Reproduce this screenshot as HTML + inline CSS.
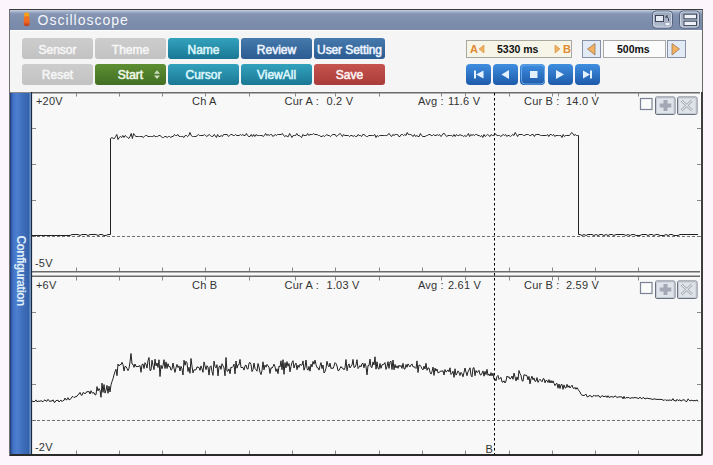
<!DOCTYPE html>
<html><head><meta charset="utf-8">
<style>
html,body{margin:0;padding:0;}
body{width:713px;height:465px;background:#fcf6fc;position:relative;overflow:hidden;font-family:"Liberation Sans",sans-serif;}
.abs{position:absolute;}
#win{left:9px;top:9px;width:692px;height:444px;border-left:1px solid #707070;border-top:1px solid #3a3a3a;border-right:1px solid #6a6a6a;border-bottom:2px solid #2a2a2a;background:#f5f5f5;border-radius:0 0 2px 0;}
#title{left:10px;top:10px;width:692px;height:20px;background:linear-gradient(#c8d2e2 0px,#9eacc6 2px,#8494b2 4px,#7c8cac 12px,#7a8aaa 20px);}
#title .t{left:27.5px;top:1.5px;font-size:14px;letter-spacing:1px;color:#f4f6fa;}
.btn{position:absolute;width:71px;height:21px;border-radius:3px;font-size:12px;font-weight:normal;-webkit-text-stroke:0.55px currentColor;text-align:center;line-height:24px;color:#fff;}
.r2{line-height:23px;}
.g{background:linear-gradient(#cdcdcd,#c2c2c2);color:#f6f6f6;}
.teal{background:linear-gradient(#33a2bd,#1a7894);color:#dcf6fc;}
.blue{background:linear-gradient(#4679ac,#2b5c92);color:#eef4ff;}
.green{background:linear-gradient(#5e8e32,#426f24);color:#f0f8e8;}
.red{background:linear-gradient(#c6544f,#a93b38);color:#fff2f2;}
.mb{position:absolute;top:64px;width:25px;height:21px;border-radius:4px;background:linear-gradient(#3f8ee0,#1d5aaa);}
svg text{white-space:pre;}
</style></head><body>
<div id="win" class="abs"></div>
<div id="title" class="abs" style="width:692px;">
  <div class="abs t">Oscilloscope</div>
</div>
<div class="abs" style="left:10px;top:30px;width:692px;height:62px;background:#f5f5f5;border-top:1px solid #fff;"></div>
<div class="btn g" style="left:22px;top:38px;">Sensor</div>
<div class="btn g" style="left:95px;top:38px;">Theme</div>
<div class="btn teal" style="left:168px;top:38px;">Name</div>
<div class="btn blue" style="left:241px;top:38px;">Review</div>
<div class="btn blue" style="left:314px;top:38px;letter-spacing:-0.1px;">User Setting</div>
<div class="btn g r2" style="left:22px;top:64px;">Reset</div>
<div class="btn green r2" style="left:95px;top:64px;">Start</div>
<div class="btn teal r2" style="left:168px;top:64px;">Cursor</div>
<div class="btn teal r2" style="left:241px;top:64px;">ViewAll</div>
<div class="btn red r2" style="left:314px;top:64px;">Save</div>

<div class="abs" style="left:466px;top:40px;width:104px;height:16px;border:1px solid #a8a8a0;background:#f7f5e8;"></div>
<div class="abs" style="left:470px;top:43px;font-size:11px;font-weight:bold;color:#e08a30;">A</div>
<div class="abs" style="left:497px;top:43px;font-size:10.5px;font-weight:bold;color:#111;">5330 ms</div>
<div class="abs" style="left:563px;top:43px;font-size:11px;font-weight:bold;color:#e08a30;">B</div>
<div class="abs" style="left:582px;top:40px;width:17px;height:16px;border:1px solid #8890a8;background:#e2eaf6;"></div>
<div class="abs" style="left:603px;top:40px;width:61px;height:16px;border:1px solid #a8a8a8;background:#fbfbfb;"></div>
<div class="abs" style="left:617px;top:43px;font-size:10.5px;font-weight:bold;color:#111;">500ms</div>
<div class="abs" style="left:667px;top:40px;width:17px;height:16px;border:1px solid #8890a8;background:#e2eaf6;"></div>

<div class="mb" style="left:466px;"></div>
<div class="mb" style="left:493px;"></div>
<div class="mb" style="left:520px;"></div>
<div class="mb" style="left:548px;"></div>
<div class="mb" style="left:575px;"></div>

<div class="abs" style="left:10px;top:93px;width:21px;height:361px;background:linear-gradient(90deg,#1c3464 0px,#2c54a0 1px,#4272c4 3px,#4e7ed0 7px,#4070bc 12px,#3464ae 18px,#3060a8 19px,#7c9ecc 20px,#7c9ecc 21px);"></div>
<div class="abs" style="left:10px;top:92px;width:692px;height:1px;background:#8a8a8a;"></div>

<svg class="abs" style="left:0;top:0" width="713" height="465">
  <defs>
    <linearGradient id="ic" x1="0" y1="0" x2="0" y2="1"><stop offset="0" stop-color="#f27a20"/><stop offset="0.6" stop-color="#ee6622"/><stop offset="1" stop-color="#b83a18"/></linearGradient>
  </defs>
  <rect x="24.2" y="12.5" width="5" height="5" rx="1.5" fill="#f8a018"/><rect x="23.8" y="16" width="5.8" height="10" rx="2" fill="url(#ic)"/>
  <path d="M98,74.5 h4 M98,71 v0" stroke="none"/>
  <path d="M154,73.8 L157,70.3 L160,73.8 Z M154,75.5 L157,79 L160,75.5 Z" fill="#cfdcc0"/>
  <path d="M479,49 L484,45 L484,53 Z" fill="#f0b060" stroke="#d09040" stroke-width="0.6"/>
  <path d="M560,49 L555,45 L555,53 Z" fill="#f0b060" stroke="#d09040" stroke-width="0.6"/>
  <path d="M587.5,49 L595,43.5 L595,55 Z" fill="#f2b060" stroke="#907050" stroke-width="0.7"/>
  <path d="M679.5,49 L672,43.5 L672,55 Z" fill="#f2b060" stroke="#907050" stroke-width="0.7"/>
  <g fill="#e4f2ff">
    <rect x="474" y="70.5" width="2" height="8"/><path d="M476,74.5 L483.5,70.5 L483.5,78.5 Z"/>
    <path d="M501.5,74.5 L509,70 L509,79 Z"/>
    <rect x="530" y="71" width="7.5" height="7"/>
    <path d="M564,74.5 L556,70 L556,79 Z"/>
    <path d="M590,74.5 L583,70.5 L583,78.5 Z"/><rect x="590" y="70.5" width="2" height="8"/>
  </g>
  <rect x="521.5" y="65" width="23" height="19" rx="3.5" fill="none" stroke="#6aa8e8" stroke-width="1"/>

  <defs><linearGradient id="tb" x1="0" y1="0" x2="0" y2="1"><stop offset="0" stop-color="#9aa6bc"/><stop offset="1" stop-color="#b4bed0"/></linearGradient></defs>
  <rect x="652.5" y="11" width="20" height="17" rx="3.5" fill="url(#tb)" stroke="#56627a" stroke-width="1"/>
  <rect x="653.5" y="12" width="18" height="15" rx="2.5" fill="none" stroke="#d6deea" stroke-width="0.8"/>
  <rect x="655.5" y="15.5" width="8" height="6" fill="#e6ebf3" stroke="#3c4658" stroke-width="1"/>
  <rect x="665" y="22.5" width="5" height="3.3" fill="#eef2f8" stroke="#8088a0" stroke-width="0.5"/>
  <path d="M666,16 L668.5,18.5 M666,16 v2 M666,16 h2 M668.5,18.5 v2.5" stroke="#3c4658" stroke-width="1" fill="none"/>
  <rect x="679.5" y="11" width="20" height="17" rx="3.5" fill="url(#tb)" stroke="#56627a" stroke-width="1"/>
  <rect x="680.5" y="12" width="18" height="15" rx="2.5" fill="none" stroke="#d6deea" stroke-width="0.8"/>
  <rect x="684" y="14.2" width="12.5" height="4.6" fill="#eef2f8" stroke="#3c4658" stroke-width="1"/>
  <rect x="684" y="21.2" width="12.5" height="4.4" fill="#eef2f8" stroke="#3c4658" stroke-width="1"/>

  <rect x="32" y="93" width="668" height="178" fill="#f8f8f8"/>
  <rect x="32" y="277" width="668" height="177" fill="#f8f8f8"/>
  <rect x="31" y="271" width="671" height="6" fill="#f8f8f8"/>
  <line x1="31" y1="92.7" x2="702" y2="92.7" stroke="#6a6a6a" stroke-width="1.5"/>
  <line x1="31" y1="271.7" x2="702" y2="271.7" stroke="#6a6a6a" stroke-width="1.5"/>
  <line x1="31" y1="276.3" x2="702" y2="276.3" stroke="#6a6a6a" stroke-width="1.5"/>
  <line x1="31.5" y1="92" x2="31.5" y2="455" stroke="#1a2a40" stroke-width="1.2"/>
  <rect x="700" y="92" width="1" height="362" fill="#fdfdfd"/><rect x="701" y="92" width="2" height="363" fill="#3e3e3e"/>
  <g stroke="#888" stroke-width="1"><line x1="76.5" y1="93" x2="76.5" y2="96.5"/><line x1="119.5" y1="93" x2="119.5" y2="96.5"/><line x1="162.5" y1="93" x2="162.5" y2="96.5"/><line x1="205.5" y1="93" x2="205.5" y2="96.5"/><line x1="249.5" y1="93" x2="249.5" y2="96.5"/><line x1="335.5" y1="93" x2="335.5" y2="96.5"/><line x1="379.5" y1="93" x2="379.5" y2="96.5"/><line x1="465.5" y1="93" x2="465.5" y2="96.5"/><line x1="509.5" y1="93" x2="509.5" y2="96.5"/><line x1="552.5" y1="93" x2="552.5" y2="96.5"/><line x1="595.5" y1="93" x2="595.5" y2="96.5"/><line x1="638.5" y1="93" x2="638.5" y2="96.5"/><line x1="295.5" y1="93" x2="295.5" y2="96.5"/><line x1="441.5" y1="93" x2="441.5" y2="96.5"/><line x1="558.5" y1="93" x2="558.5" y2="96.5"/><line x1="76.5" y1="267.5" x2="76.5" y2="271"/><line x1="119.5" y1="267.5" x2="119.5" y2="271"/><line x1="162.5" y1="267.5" x2="162.5" y2="271"/><line x1="205.5" y1="267.5" x2="205.5" y2="271"/><line x1="249.5" y1="267.5" x2="249.5" y2="271"/><line x1="292.5" y1="267.5" x2="292.5" y2="271"/><line x1="335.5" y1="267.5" x2="335.5" y2="271"/><line x1="379.5" y1="267.5" x2="379.5" y2="271"/><line x1="422.5" y1="267.5" x2="422.5" y2="271"/><line x1="465.5" y1="267.5" x2="465.5" y2="271"/><line x1="509.5" y1="267.5" x2="509.5" y2="271"/><line x1="552.5" y1="267.5" x2="552.5" y2="271"/><line x1="595.5" y1="267.5" x2="595.5" y2="271"/><line x1="638.5" y1="267.5" x2="638.5" y2="271"/><line x1="76.5" y1="277" x2="76.5" y2="280.5"/><line x1="119.5" y1="277" x2="119.5" y2="280.5"/><line x1="162.5" y1="277" x2="162.5" y2="280.5"/><line x1="205.5" y1="277" x2="205.5" y2="280.5"/><line x1="249.5" y1="277" x2="249.5" y2="280.5"/><line x1="335.5" y1="277" x2="335.5" y2="280.5"/><line x1="379.5" y1="277" x2="379.5" y2="280.5"/><line x1="465.5" y1="277" x2="465.5" y2="280.5"/><line x1="509.5" y1="277" x2="509.5" y2="280.5"/><line x1="552.5" y1="277" x2="552.5" y2="280.5"/><line x1="595.5" y1="277" x2="595.5" y2="280.5"/><line x1="638.5" y1="277" x2="638.5" y2="280.5"/><line x1="295.5" y1="277" x2="295.5" y2="280.5"/><line x1="441.5" y1="277" x2="441.5" y2="280.5"/><line x1="558.5" y1="277" x2="558.5" y2="280.5"/><line x1="76.5" y1="450.5" x2="76.5" y2="454"/><line x1="119.5" y1="450.5" x2="119.5" y2="454"/><line x1="162.5" y1="450.5" x2="162.5" y2="454"/><line x1="205.5" y1="450.5" x2="205.5" y2="454"/><line x1="249.5" y1="450.5" x2="249.5" y2="454"/><line x1="292.5" y1="450.5" x2="292.5" y2="454"/><line x1="335.5" y1="450.5" x2="335.5" y2="454"/><line x1="379.5" y1="450.5" x2="379.5" y2="454"/><line x1="422.5" y1="450.5" x2="422.5" y2="454"/><line x1="465.5" y1="450.5" x2="465.5" y2="454"/><line x1="509.5" y1="450.5" x2="509.5" y2="454"/><line x1="552.5" y1="450.5" x2="552.5" y2="454"/><line x1="595.5" y1="450.5" x2="595.5" y2="454"/><line x1="638.5" y1="450.5" x2="638.5" y2="454"/><line x1="32" y1="128.5" x2="36" y2="128.5"/><line x1="697" y1="128.5" x2="701" y2="128.5"/><line x1="32" y1="164.5" x2="36" y2="164.5"/><line x1="697" y1="164.5" x2="701" y2="164.5"/><line x1="32" y1="200.5" x2="36" y2="200.5"/><line x1="697" y1="200.5" x2="701" y2="200.5"/><line x1="32" y1="236.5" x2="36" y2="236.5"/><line x1="697" y1="236.5" x2="701" y2="236.5"/><line x1="32" y1="312.5" x2="36" y2="312.5"/><line x1="697" y1="312.5" x2="701" y2="312.5"/><line x1="32" y1="348.5" x2="36" y2="348.5"/><line x1="697" y1="348.5" x2="701" y2="348.5"/><line x1="32" y1="384.5" x2="36" y2="384.5"/><line x1="697" y1="384.5" x2="701" y2="384.5"/><line x1="32" y1="420.5" x2="36" y2="420.5"/><line x1="697" y1="420.5" x2="701" y2="420.5"/></g>
  <line x1="32" y1="236.5" x2="701" y2="236.5" stroke="#707070" stroke-width="1" stroke-dasharray="3 2"/>
  <line x1="32" y1="420.5" x2="701" y2="420.5" stroke="#707070" stroke-width="1" stroke-dasharray="3 2"/>
  <path d="M32.0,235.5 L34.0,235.5 L36.0,235.5 L38.0,235.5 L40.0,235.5 L42.0,235.5 L44.0,235.5 L46.0,235.5 L48.0,235.5 L50.0,235.5 L52.0,235.5 L54.0,235.5 L56.0,235.5 L58.0,235.5 L60.0,235.5 L62.0,235.5 L64.0,235.5 L66.0,235.5 L68.0,235.5 L70.0,235.5 L72.0,234.5 L74.0,234.5 L76.0,234.5 L78.0,234.5 L80.0,235.5 L82.0,234.5 L84.0,234.5 L86.0,234.5 L88.0,235.5 L90.0,234.5 L92.0,234.5 L94.0,234.5 L96.0,234.5 L98.0,235.5 L100.0,234.5 L102.0,234.5 L104.0,235.5 L106.0,235.5 L108.0,234.5 L110.5,234.5 L110.5,138.5 L112.0,137.5 L113.2,138.5 L114.4,138.5 L115.6,136.5 L116.8,134.5 L118.0,139.5 L119.2,137.5 L120.4,136.5 L121.6,137.5 L122.8,135.5 L124.0,137.5 L125.2,135.5 L126.4,136.5 L127.6,137.5 L128.8,138.5 L130.0,136.5 L131.2,133.5 L132.4,138.5 L133.6,133.5 L134.8,135.5 L136.0,136.5 L137.2,136.5 L138.4,136.5 L139.6,136.5 L140.8,136.5 L142.0,136.5 L143.2,137.5 L144.4,136.5 L145.6,135.5 L146.8,135.5 L148.0,136.5 L149.2,136.5 L150.4,136.5 L151.6,136.5 L152.8,136.5 L154.0,135.5 L155.2,136.5 L156.4,136.5 L157.6,136.5 L158.8,135.5 L160.0,135.5 L161.2,136.5 L162.4,137.5 L163.6,137.5 L164.8,136.5 L166.0,136.5 L167.2,137.5 L168.4,136.5 L169.6,136.5 L170.8,137.5 L172.0,136.5 L173.2,136.5 L174.4,134.5 L175.6,135.5 L176.8,135.5 L178.0,134.5 L179.2,136.5 L180.4,136.5 L181.6,136.5 L182.8,136.5 L184.0,137.5 L185.2,135.5 L186.4,135.5 L187.6,136.5 L188.8,135.5 L190.0,132.5 L191.2,135.5 L192.4,136.5 L193.6,136.5 L194.8,136.5 L196.0,136.5 L197.2,135.5 L198.4,134.5 L199.6,135.5 L200.8,135.5 L202.0,135.5 L203.2,135.5 L204.4,134.5 L205.6,135.5 L206.8,136.5 L208.0,135.5 L209.2,134.5 L210.4,135.5 L211.6,136.5 L212.8,136.5 L214.0,134.5 L215.2,135.5 L216.4,137.5 L217.6,134.5 L218.8,136.5 L220.0,136.5 L221.2,135.5 L222.4,136.5 L223.6,134.5 L224.8,134.5 L226.0,134.5 L227.2,134.5 L228.4,136.5 L229.6,135.5 L230.8,134.5 L232.0,134.5 L233.2,135.5 L234.4,135.5 L235.6,134.5 L236.8,135.5 L238.0,135.5 L239.2,135.5 L240.4,134.5 L241.6,135.5 L242.8,134.5 L244.0,135.5 L245.2,135.5 L246.4,133.5 L247.6,135.5 L248.8,136.5 L250.0,136.5 L251.2,134.5 L252.4,136.5 L253.6,134.5 L254.8,136.5 L256.0,134.5 L257.2,135.5 L258.4,135.5 L259.6,135.5 L260.8,135.5 L262.0,135.5 L263.2,136.5 L264.4,135.5 L265.6,133.5 L266.8,135.5 L268.0,134.5 L269.2,135.5 L270.4,134.5 L271.6,134.5 L272.8,136.5 L274.0,135.5 L275.2,134.5 L276.4,135.5 L277.6,134.5 L278.8,134.5 L280.0,134.5 L281.2,134.5 L282.4,133.5 L283.6,135.5 L284.8,136.5 L286.0,135.5 L287.2,136.5 L288.4,136.5 L289.6,133.5 L290.8,135.5 L292.0,137.5 L293.2,135.5 L294.4,135.5 L295.6,135.5 L296.8,133.5 L298.0,135.5 L299.2,135.5 L300.4,136.5 L301.6,137.5 L302.8,134.5 L304.0,135.5 L305.2,135.5 L306.4,135.5 L307.6,133.5 L308.8,135.5 L310.0,134.5 L311.2,134.5 L312.4,134.5 L313.6,133.5 L314.8,134.5 L316.0,134.5 L317.2,134.5 L318.4,135.5 L319.6,135.5 L320.8,136.5 L322.0,136.5 L323.2,135.5 L324.4,136.5 L325.6,135.5 L326.8,134.5 L328.0,135.5 L329.2,135.5 L330.4,136.5 L331.6,135.5 L332.8,134.5 L334.0,134.5 L335.2,134.5 L336.4,136.5 L337.6,135.5 L338.8,134.5 L340.0,133.5 L341.2,134.5 L342.4,136.5 L343.6,134.5 L344.8,135.5 L346.0,135.5 L347.2,135.5 L348.4,135.5 L349.6,136.5 L350.8,135.5 L352.0,135.5 L353.2,136.5 L354.4,135.5 L355.6,136.5 L356.8,136.5 L358.0,134.5 L359.2,135.5 L360.4,135.5 L361.6,136.5 L362.8,134.5 L364.0,134.5 L365.2,135.5 L366.4,136.5 L367.6,136.5 L368.8,135.5 L370.0,135.5 L371.2,135.5 L372.4,135.5 L373.6,135.5 L374.8,134.5 L376.0,137.5 L377.2,135.5 L378.4,136.5 L379.6,135.5 L380.8,135.5 L382.0,135.5 L383.2,135.5 L384.4,135.5 L385.6,135.5 L386.8,135.5 L388.0,134.5 L389.2,133.5 L390.4,135.5 L391.6,136.5 L392.8,134.5 L394.0,135.5 L395.2,134.5 L396.4,134.5 L397.6,134.5 L398.8,136.5 L400.0,136.5 L401.2,134.5 L402.4,134.5 L403.6,135.5 L404.8,134.5 L406.0,135.5 L407.2,132.5 L408.4,134.5 L409.6,134.5 L410.8,134.5 L412.0,135.5 L413.2,136.5 L414.4,134.5 L415.6,136.5 L416.8,135.5 L418.0,136.5 L419.2,136.5 L420.4,133.5 L421.6,135.5 L422.8,136.5 L424.0,136.5 L425.2,136.5 L426.4,135.5 L427.6,135.5 L428.8,134.5 L430.0,134.5 L431.2,135.5 L432.4,135.5 L433.6,134.5 L434.8,135.5 L436.0,135.5 L437.2,134.5 L438.4,135.5 L439.6,134.5 L440.8,136.5 L442.0,135.5 L443.2,133.5 L444.4,133.5 L445.6,135.5 L446.8,136.5 L448.0,135.5 L449.2,135.5 L450.4,135.5 L451.6,135.5 L452.8,136.5 L454.0,134.5 L455.2,136.5 L456.4,134.5 L457.6,135.5 L458.8,135.5 L460.0,134.5 L461.2,135.5 L462.4,135.5 L463.6,136.5 L464.8,135.5 L466.0,136.5 L467.2,135.5 L468.4,133.5 L469.6,136.5 L470.8,134.5 L472.0,135.5 L473.2,134.5 L474.4,135.5 L475.6,134.5 L476.8,134.5 L478.0,135.5 L479.2,135.5 L480.4,136.5 L481.6,135.5 L482.8,137.5 L484.0,134.5 L485.2,136.5 L486.4,135.5 L487.6,134.5 L488.8,135.5 L490.0,136.5 L491.2,134.5 L492.4,135.5 L493.6,135.5 L494.8,133.5 L496.0,134.5 L497.2,135.5 L498.4,135.5 L499.6,135.5 L500.8,136.5 L502.0,135.5 L503.2,134.5 L504.4,135.5 L505.6,134.5 L506.8,136.5 L508.0,135.5 L509.2,135.5 L510.4,136.5 L511.6,135.5 L512.8,134.5 L514.0,135.5 L515.2,132.5 L516.4,134.5 L517.6,136.5 L518.8,134.5 L520.0,134.5 L521.2,134.5 L522.4,134.5 L523.6,135.5 L524.8,135.5 L526.0,134.5 L527.2,134.5 L528.4,134.5 L529.6,135.5 L530.8,135.5 L532.0,134.5 L533.2,134.5 L534.4,136.5 L535.6,134.5 L536.8,134.5 L538.0,134.5 L539.2,134.5 L540.4,135.5 L541.6,135.5 L542.8,135.5 L544.0,135.5 L545.2,135.5 L546.4,135.5 L547.6,134.5 L548.8,136.5 L550.0,134.5 L551.2,134.5 L552.4,135.5 L553.6,134.5 L554.8,136.5 L556.0,135.5 L557.2,135.5 L558.4,135.5 L559.6,135.5 L560.8,135.5 L562.0,137.5 L563.2,134.5 L564.4,136.5 L565.6,135.5 L566.8,135.5 L568.0,135.5 L569.2,135.5 L570.4,134.5 L571.6,132.5 L572.8,133.5 L574.0,135.5 L575.2,134.5 L576.4,135.5 L577.6,135.5 L578.5,135.5 L578.5,234.5 L580.0,234.5 L582.0,235.5 L584.0,234.5 L586.0,235.5 L588.0,234.5 L590.0,234.5 L592.0,234.5 L594.0,235.5 L596.0,234.5 L598.0,235.5 L600.0,234.5 L602.0,234.5 L604.0,235.5 L606.0,234.5 L608.0,235.5 L610.0,234.5 L612.0,234.5 L614.0,235.5 L616.0,234.5 L618.0,234.5 L620.0,234.5 L622.0,234.5 L624.0,234.5 L626.0,235.5 L628.0,234.5 L630.0,235.5 L632.0,234.5 L634.0,234.5 L636.0,235.5 L638.0,235.5 L640.0,235.5 L642.0,234.5 L644.0,234.5 L646.0,234.5 L648.0,235.5 L650.0,234.5 L652.0,234.5 L654.0,235.5 L656.0,234.5 L658.0,234.5 L660.0,235.5 L662.0,235.5 L664.0,235.5 L666.0,234.5 L668.0,235.5 L670.0,234.5 L672.0,234.5 L674.0,235.5 L676.0,235.5 L678.0,235.5 L680.0,234.5 L682.0,234.5 L684.0,234.5 L686.0,234.5 L688.0,234.5 L690.0,234.5 L692.0,234.5 L694.0,234.5 L696.0,234.5 L698.0,234.5" fill="none" stroke="#222" stroke-width="1"/>
  <path d="M32.0,401.1 L33.0,401.4 L34.0,401.7 L35.0,401.4 L36.0,399.9 L37.0,401.8 L38.0,401.1 L39.0,401.2 L40.0,401.3 L41.0,400.6 L42.0,401.3 L43.0,401.8 L44.0,400.4 L45.0,399.9 L46.0,401.2 L47.0,401.1 L48.0,399.3 L49.0,400.8 L50.0,401.6 L51.0,400.7 L52.0,401.2 L53.0,399.8 L54.0,402.1 L55.0,402.3 L56.0,400.5 L57.0,400.5 L58.0,400.1 L59.0,402.0 L60.0,400.8 L61.0,400.1 L62.0,401.7 L63.0,400.6 L64.0,400.4 L65.0,398.0 L66.0,399.8 L67.0,399.7 L68.0,397.7 L69.0,399.8 L70.0,399.4 L71.0,398.6 L72.0,396.7 L73.0,396.6 L74.0,397.6 L75.0,396.9 L76.0,396.7 L77.0,396.2 L78.0,394.6 L79.0,394.1 L80.0,392.4 L81.0,394.9 L82.0,395.4 L83.0,392.5 L84.0,393.0 L85.0,393.6 L86.0,393.0 L87.0,391.3 L88.0,392.1 L89.0,391.3 L90.0,394.0 L91.0,390.7 L92.0,392.8 L93.0,393.0 L94.0,392.7 L95.0,394.9 L96.0,394.7 L97.0,386.6 L98.0,390.9 L99.0,388.6 L100.0,390.2 L101.0,397.3 L102.0,383.1 L103.0,392.4 L104.0,384.5 L105.0,393.1 L106.0,390.3 L107.0,385.4 L108.0,393.3 L109.0,386.1 L110.0,392.0 L111.0,384.9 L112.0,381.5 L113.0,378.8 L114.0,374.9 L115.0,371.6 L116.0,369.3 L117.0,375.7 L118.0,364.1 L119.0,366.0 L120.0,364.6 L121.0,364.7 L122.0,362.3 L123.0,364.6 L124.0,371.0 L125.0,366.3 L126.0,366.6 L127.0,368.4 L128.0,370.6 L129.0,368.4 L130.0,362.0 L131.0,353.5 L132.0,364.0 L133.0,364.3 L134.0,367.4 L135.0,364.0 L136.0,366.5 L137.0,366.6 L138.0,366.4 L139.0,366.3 L140.0,365.5 L141.0,372.3 L142.0,364.5 L143.0,364.0 L144.0,368.6 L145.0,362.7 L146.0,364.2 L147.0,368.1 L148.0,360.7 L149.0,357.5 L150.0,370.6 L151.0,370.1 L152.0,360.2 L153.0,365.5 L154.0,369.7 L155.0,359.2 L156.0,365.9 L157.0,363.0 L158.0,367.5 L159.0,359.8 L160.0,376.5 L161.0,365.3 L162.0,368.7 L163.0,365.6 L164.0,359.7 L165.0,368.5 L166.0,361.9 L167.0,368.5 L168.0,363.7 L169.0,366.9 L170.0,366.5 L171.0,370.2 L172.0,369.3 L173.0,363.0 L174.0,368.2 L175.0,372.4 L176.0,367.8 L177.0,364.4 L178.0,367.5 L179.0,365.9 L180.0,371.0 L181.0,366.4 L182.0,368.8 L183.0,375.0 L184.0,360.2 L185.0,365.3 L186.0,361.3 L187.0,362.8 L188.0,371.5 L189.0,367.3 L190.0,373.3 L191.0,358.5 L192.0,366.2 L193.0,372.9 L194.0,369.7 L195.0,370.0 L196.0,369.8 L197.0,366.8 L198.0,367.4 L199.0,367.4 L200.0,370.4 L201.0,365.9 L202.0,368.8 L203.0,372.3 L204.0,361.9 L205.0,365.9 L206.0,369.7 L207.0,365.7 L208.0,367.1 L209.0,375.1 L210.0,366.8 L211.0,365.8 L212.0,371.7 L213.0,375.4 L214.0,361.1 L215.0,366.3 L216.0,367.9 L217.0,364.7 L218.0,375.9 L219.0,367.0 L220.0,365.8 L221.0,369.4 L222.0,363.7 L223.0,365.8 L224.0,367.9 L225.0,375.8 L226.0,357.5 L227.0,371.1 L228.0,371.2 L229.0,368.9 L230.0,373.8 L231.0,367.1 L232.0,367.7 L233.0,366.5 L234.0,364.1 L235.0,373.9 L236.0,361.0 L237.0,368.2 L238.0,364.9 L239.0,364.7 L240.0,359.4 L241.0,367.6 L242.0,367.4 L243.0,367.5 L244.0,370.1 L245.0,365.7 L246.0,365.0 L247.0,368.7 L248.0,369.1 L249.0,363.2 L250.0,362.4 L251.0,364.4 L252.0,371.6 L253.0,369.6 L254.0,363.1 L255.0,368.4 L256.0,369.7 L257.0,371.2 L258.0,363.5 L259.0,367.0 L260.0,372.2 L261.0,374.6 L262.0,370.7 L263.0,361.8 L264.0,369.9 L265.0,365.1 L266.0,367.2 L267.0,364.4 L268.0,365.8 L269.0,367.2 L270.0,373.5 L271.0,367.8 L272.0,368.2 L273.0,366.7 L274.0,364.2 L275.0,366.7 L276.0,371.5 L277.0,368.8 L278.0,373.7 L279.0,366.1 L280.0,367.0 L281.0,360.8 L282.0,369.8 L283.0,359.7 L284.0,374.3 L285.0,362.6 L286.0,367.9 L287.0,361.6 L288.0,366.3 L289.0,363.5 L290.0,371.8 L291.0,366.4 L292.0,362.5 L293.0,360.7 L294.0,368.0 L295.0,364.6 L296.0,363.1 L297.0,369.7 L298.0,365.2 L299.0,367.4 L300.0,364.2 L301.0,365.1 L302.0,365.2 L303.0,360.9 L304.0,370.2 L305.0,367.1 L306.0,360.0 L307.0,368.5 L308.0,370.2 L309.0,366.4 L310.0,371.2 L311.0,364.2 L312.0,366.9 L313.0,361.4 L314.0,364.2 L315.0,360.1 L316.0,364.5 L317.0,367.6 L318.0,367.8 L319.0,370.1 L320.0,365.7 L321.0,362.6 L322.0,368.6 L323.0,365.0 L324.0,373.0 L325.0,371.6 L326.0,368.3 L327.0,361.3 L328.0,365.3 L329.0,366.9 L330.0,363.1 L331.0,368.6 L332.0,367.8 L333.0,368.6 L334.0,366.1 L335.0,362.6 L336.0,363.6 L337.0,366.0 L338.0,370.7 L339.0,370.4 L340.0,368.3 L341.0,366.5 L342.0,368.1 L343.0,368.2 L344.0,369.9 L345.0,367.8 L346.0,359.5 L347.0,370.7 L348.0,365.8 L349.0,363.9 L350.0,368.0 L351.0,366.1 L352.0,365.2 L353.0,359.4 L354.0,367.5 L355.0,367.1 L356.0,364.9 L357.0,359.7 L358.0,368.6 L359.0,367.3 L360.0,365.6 L361.0,366.9 L362.0,363.7 L363.0,363.3 L364.0,367.8 L365.0,363.4 L366.0,366.4 L367.0,374.9 L368.0,365.5 L369.0,365.7 L370.0,359.1 L371.0,367.1 L372.0,367.5 L373.0,361.9 L374.0,365.0 L375.0,356.8 L376.0,369.2 L377.0,361.8 L378.0,368.4 L379.0,369.2 L380.0,363.5 L381.0,368.3 L382.0,364.9 L383.0,364.4 L384.0,364.3 L385.0,362.6 L386.0,369.4 L387.0,366.5 L388.0,361.6 L389.0,368.4 L390.0,362.0 L391.0,361.2 L392.0,369.5 L393.0,360.0 L394.0,369.8 L395.0,364.4 L396.0,367.9 L397.0,365.8 L398.0,368.3 L399.0,365.2 L400.0,366.7 L401.0,365.4 L402.0,368.4 L403.0,363.3 L404.0,368.9 L405.0,369.1 L406.0,364.5 L407.0,367.3 L408.0,363.9 L409.0,365.5 L410.0,366.9 L411.0,364.9 L412.0,363.9 L413.0,366.8 L414.0,366.8 L415.0,367.4 L416.0,368.5 L417.0,360.9 L418.0,372.5 L419.0,365.0 L420.0,365.2 L421.0,366.6 L422.0,368.9 L423.0,369.9 L424.0,366.2 L425.0,369.0 L426.0,363.3 L427.0,370.3 L428.0,368.0 L429.0,367.9 L430.0,372.2 L431.0,374.1 L432.0,371.6 L433.0,367.1 L434.0,375.4 L435.0,368.1 L436.0,371.1 L437.0,369.0 L438.0,372.9 L439.0,372.5 L440.0,371.6 L441.0,370.9 L442.0,371.4 L443.0,370.6 L444.0,375.0 L445.0,369.5 L446.0,372.0 L447.0,371.3 L448.0,369.9 L449.0,371.9 L450.0,367.8 L451.0,374.5 L452.0,373.3 L453.0,371.2 L454.0,377.4 L455.0,368.8 L456.0,375.1 L457.0,373.4 L458.0,370.9 L459.0,372.5 L460.0,375.5 L461.0,372.3 L462.0,373.8 L463.0,376.8 L464.0,372.5 L465.0,368.0 L466.0,372.0 L467.0,375.7 L468.0,371.9 L469.0,370.0 L470.0,367.8 L471.0,375.2 L472.0,376.9 L473.0,368.2 L474.0,367.6 L475.0,375.7 L476.0,370.5 L477.0,372.5 L478.0,371.9 L479.0,370.3 L480.0,374.7 L481.0,375.0 L482.0,373.2 L483.0,370.9 L484.0,376.2 L485.0,371.4 L486.0,374.6 L487.0,369.3 L488.0,375.3 L489.0,374.0 L490.0,376.0 L491.0,372.6 L492.0,375.9 L493.0,373.2 L494.0,379.3 L495.0,378.6 L496.0,380.8 L497.0,376.4 L498.0,375.4 L499.0,379.4 L500.0,378.3 L501.0,377.4 L502.0,382.0 L503.0,382.2 L504.0,380.8 L505.0,383.0 L506.0,381.0 L507.0,376.0 L508.0,377.3 L509.0,376.7 L510.0,379.0 L511.0,378.2 L512.0,376.0 L513.0,379.3 L514.0,373.1 L515.0,376.9 L516.0,380.9 L517.0,376.9 L518.0,379.8 L519.0,370.5 L520.0,373.6 L521.0,375.3 L522.0,380.6 L523.0,381.2 L524.0,374.6 L525.0,375.3 L526.0,375.1 L527.0,375.7 L528.0,379.9 L529.0,376.4 L530.0,383.9 L531.0,378.8 L532.0,376.2 L533.0,379.8 L534.0,377.9 L535.0,381.4 L536.0,381.1 L537.0,377.6 L538.0,382.4 L539.0,380.4 L540.0,379.2 L541.0,380.7 L542.0,381.8 L543.0,378.8 L544.0,378.7 L545.0,382.8 L546.0,380.3 L547.0,380.5 L548.0,382.5 L549.0,379.6 L550.0,383.0 L551.0,380.5 L552.0,383.0 L553.0,380.8 L554.0,383.4 L555.0,385.6 L556.0,383.9 L557.0,383.3 L558.0,388.2 L559.0,384.0 L560.0,388.6 L561.0,384.7 L562.0,384.4 L563.0,389.4 L564.0,384.9 L565.0,387.9 L566.0,387.9 L567.0,384.3 L568.0,387.3 L569.0,385.7 L570.0,388.0 L571.0,386.6 L572.0,385.2 L573.0,387.9 L574.0,388.7 L575.0,387.3 L576.0,389.3 L577.0,387.6 L578.0,389.2 L579.0,390.9 L580.0,391.8 L581.0,394.4 L582.0,395.2 L583.0,395.4 L584.0,395.5 L585.0,395.1 L586.0,394.1 L587.0,396.7 L588.0,397.0 L589.0,395.6 L590.0,395.7 L591.0,396.0 L592.0,397.2 L593.0,396.1 L594.0,395.2 L595.0,396.3 L596.0,395.5 L597.0,396.3 L598.0,395.5 L599.0,395.8 L600.0,397.5 L601.0,396.9 L602.0,395.5 L603.0,396.3 L604.0,396.5 L605.0,396.5 L606.0,395.9 L607.0,397.5 L608.0,395.7 L609.0,397.5 L610.0,397.1 L611.0,396.6 L612.0,396.6 L613.0,397.1 L614.0,397.1 L615.0,395.8 L616.0,396.6 L617.0,397.5 L618.0,397.0 L619.0,397.0 L620.0,396.7 L621.0,397.0 L622.0,396.9 L623.0,398.9 L624.0,396.3 L625.0,398.6 L626.0,397.5 L627.0,397.7 L628.0,397.7 L629.0,397.4 L630.0,398.7 L631.0,397.8 L632.0,397.8 L633.0,397.8 L634.0,398.0 L635.0,397.2 L636.0,398.0 L637.0,397.7 L638.0,398.5 L639.0,398.4 L640.0,397.0 L641.0,398.4 L642.0,398.8 L643.0,397.4 L644.0,397.9 L645.0,399.1 L646.0,398.2 L647.0,398.4 L648.0,398.0 L649.0,399.0 L650.0,398.4 L651.0,399.1 L652.0,399.2 L653.0,399.4 L654.0,398.8 L655.0,399.0 L656.0,399.4 L657.0,399.3 L658.0,399.6 L659.0,399.2 L660.0,399.5 L661.0,399.4 L662.0,399.5 L663.0,400.0 L664.0,400.6 L665.0,399.5 L666.0,400.5 L667.0,400.1 L668.0,400.1 L669.0,400.5 L670.0,399.7 L671.0,400.5 L672.0,400.2 L673.0,398.6 L674.0,400.8 L675.0,400.4 L676.0,401.3 L677.0,399.3 L678.0,400.5 L679.0,400.4 L680.0,399.7 L681.0,401.2 L682.0,400.4 L683.0,399.9 L684.0,399.8 L685.0,400.3 L686.0,401.8 L687.0,401.3 L688.0,398.9 L689.0,399.8 L690.0,401.0 L691.0,400.3 L692.0,400.2 L693.0,400.9 L694.0,400.5 L695.0,400.7 L696.0,400.7 L697.0,399.9 L698.0,401.5" fill="none" stroke="#222" stroke-width="1"/>
  <line x1="494.5" y1="93" x2="494.5" y2="454" stroke="#000" stroke-width="1" stroke-dasharray="2.5 2.5"/>
  <g font-family="Liberation Sans" font-size="11" fill="#333" letter-spacing="0.2">
    <text x="36" y="105">+20V</text>
    <text x="192" y="105">Ch A</text>
    <text x="284.5" y="105">Cur A :</text><text x="326.5" y="105">0.2 V</text>
    <text x="418" y="105">Avg :</text><text x="448" y="105">11.6 V</text>
    <text x="524" y="105">Cur B :</text><text x="566" y="105">14.0 V</text>
    <text x="35" y="267">-5V</text>
    <text x="36" y="289">+6V</text>
    <text x="192" y="289">Ch B</text>
    <text x="284.5" y="289">Cur A :</text><text x="326.5" y="289">1.03 V</text>
    <text x="418" y="289">Avg :</text><text x="448" y="289">2.61 V</text>
    <text x="524" y="289">Cur B :</text><text x="566" y="289">2.59 V</text>
    <text x="35" y="451">-2V</text>
    <text x="485.5" y="453">B</text>
  </g>
<g transform="translate(0,0)">
    <rect x="640.5" y="98.5" width="11.5" height="11" fill="#fbfbfb" stroke="#7a8294" stroke-width="1.2"/>
    <rect x="655.5" y="97" width="19.5" height="17.5" rx="1.5" fill="#dfe3ea" stroke="#6a7080" stroke-width="1"/>
    <rect x="677.5" y="97" width="19.5" height="17.5" rx="1.5" fill="#dfe3ea" stroke="#6a7080" stroke-width="1"/>
    <rect x="656.5" y="98" width="17.5" height="15.5" fill="none" stroke="#c4cad4" stroke-width="1"/>
    <rect x="678.5" y="98" width="17.5" height="15.5" fill="none" stroke="#c4cad4" stroke-width="1"/>
    <path d="M663.5,100 h4 v3.5 h3.8 v4 h-3.8 v3.5 h-4 v-3.5 h-3.8 v-4 h3.8 z" fill="#a2a9b5"/>
    <path d="M681.5,100.5 L692,110.5 M692,100.5 L681.5,110.5" stroke="#a8aeb8" stroke-width="2.6"/>
    <path d="M681.5,100.5 L692,110.5 M692,100.5 L681.5,110.5" stroke="#f2f4f6" stroke-width="1"/>
  </g><g transform="translate(0,184)">
    <rect x="640.5" y="98.5" width="11.5" height="11" fill="#fbfbfb" stroke="#7a8294" stroke-width="1.2"/>
    <rect x="655.5" y="97" width="19.5" height="17.5" rx="1.5" fill="#dfe3ea" stroke="#6a7080" stroke-width="1"/>
    <rect x="677.5" y="97" width="19.5" height="17.5" rx="1.5" fill="#dfe3ea" stroke="#6a7080" stroke-width="1"/>
    <rect x="656.5" y="98" width="17.5" height="15.5" fill="none" stroke="#c4cad4" stroke-width="1"/>
    <rect x="678.5" y="98" width="17.5" height="15.5" fill="none" stroke="#c4cad4" stroke-width="1"/>
    <path d="M663.5,100 h4 v3.5 h3.8 v4 h-3.8 v3.5 h-4 v-3.5 h-3.8 v-4 h3.8 z" fill="#a2a9b5"/>
    <path d="M681.5,100.5 L692,110.5 M692,100.5 L681.5,110.5" stroke="#a8aeb8" stroke-width="2.6"/>
    <path d="M681.5,100.5 L692,110.5 M692,100.5 L681.5,110.5" stroke="#f2f4f6" stroke-width="1"/>
  </g>
  <text transform="translate(17,235.5) rotate(90)" font-family="Liberation Sans" font-size="12" font-weight="bold" letter-spacing="-0.65" fill="#dcecf8">Configuration</text>
</svg>
</body></html>
